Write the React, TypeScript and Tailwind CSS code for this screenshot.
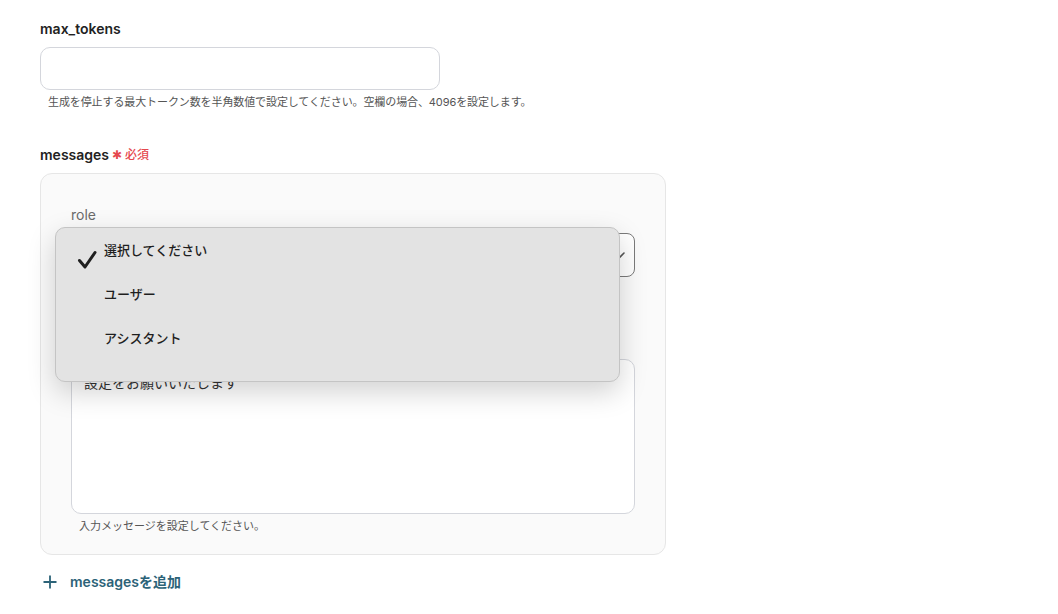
import React from "react";

const font = { fontFamily: 'Inter, "Noto Sans CJK JP", sans-serif' };

function Check() {
  return (
    <svg width="20" height="20" viewBox="0 0 20 20" fill="none">
      <path d="M2.5 10.5 L8 17 L18 2.5" stroke="#1f1f1f" strokeWidth="3" strokeLinecap="round" strokeLinejoin="round" />
    </svg>
  );
}

export default function App() {
  const options = ["選択してください", "ユーザー", "アシスタント"];

  return (
    <div className="min-h-screen bg-white px-10 pt-[19px] text-[#222]" style={font}>
      <div className="text-sm font-semibold leading-5">max_tokens</div>
      <input className="mt-2 block h-[43px] w-[400px] rounded-[10px] border border-[#d4d6dc] bg-white px-3 text-sm outline-none" />
      <div className="mt-1 px-2 text-[11px] leading-4 tracking-[-0.1px] text-[#555]">
        生成を停止する最大トークン数を半角数値で設定してください。空欄の場合、4096を設定します。
      </div>

      <div className="mt-[35px] flex items-center text-sm font-semibold leading-5">
        messages
        <span className="ml-[3px] text-[12px] text-[#e5484d]" style={{ fontFamily: '"DejaVu Sans", sans-serif' }}>✱</span>
        <span className="ml-[3px] text-[12px] font-medium text-[#e5484d]">必須</span>
      </div>

      <div className="relative mt-2 w-[626px] rounded-xl border border-[#e6e6e6] bg-[#fafafa] px-[30px] pt-[31px] pb-[20px]">
        <div className="text-sm leading-5 text-[#6b6b6b]">role</div>
        <div className="relative mt-2 flex h-[44px] items-center rounded-lg border border-[#7a7a7a] bg-white px-3">
          <svg className="absolute right-[8px]" width="14" height="14" viewBox="0 0 14 14" fill="none">
            <path d="M2 5 L7 10 L12 5" stroke="#555" strokeWidth="1.6" strokeLinecap="round" />
          </svg>
        </div>

        <div className="mt-[82px] h-[155px] rounded-[10px] border border-[#d4d6dc] bg-white px-3 pt-[13px] text-sm leading-5 text-[#333]">
          設定をお願いいたします
        </div>
        <div className="mt-1 px-2 text-[11px] leading-4 text-[#555]">入力メッセージを設定してください。</div>

        <div className="absolute left-[14px] top-[53px] w-[565px] rounded-[10px] border border-[#c4c4c4] bg-[#e3e3e3] pt-[1px] pb-[20px] shadow-[0_10px_28px_rgba(0,0,0,0.18)]">
          {options.map((o, i) => (
            <div key={o} className="relative flex h-[44px] items-center pl-[48px] text-[13px] font-medium text-[#1f1f1f]">
              {i === 0 && (
                <span className="absolute left-[21px] top-[21px]">
                  <Check />
                </span>
              )}
              {o}
            </div>
          ))}
        </div>
      </div>

      <div className="mt-[17px] flex items-center text-sm font-semibold leading-5 text-[#2c6378]">
        <svg className="ml-[3px] mr-[13px]" width="14" height="14" viewBox="0 0 14 14" fill="none">
          <path d="M7 0.5 V13.5 M0.5 7 H13.5" stroke="#2c6378" strokeWidth="1.8" />
        </svg>
        messagesを追加
      </div>
    </div>
  );
}
